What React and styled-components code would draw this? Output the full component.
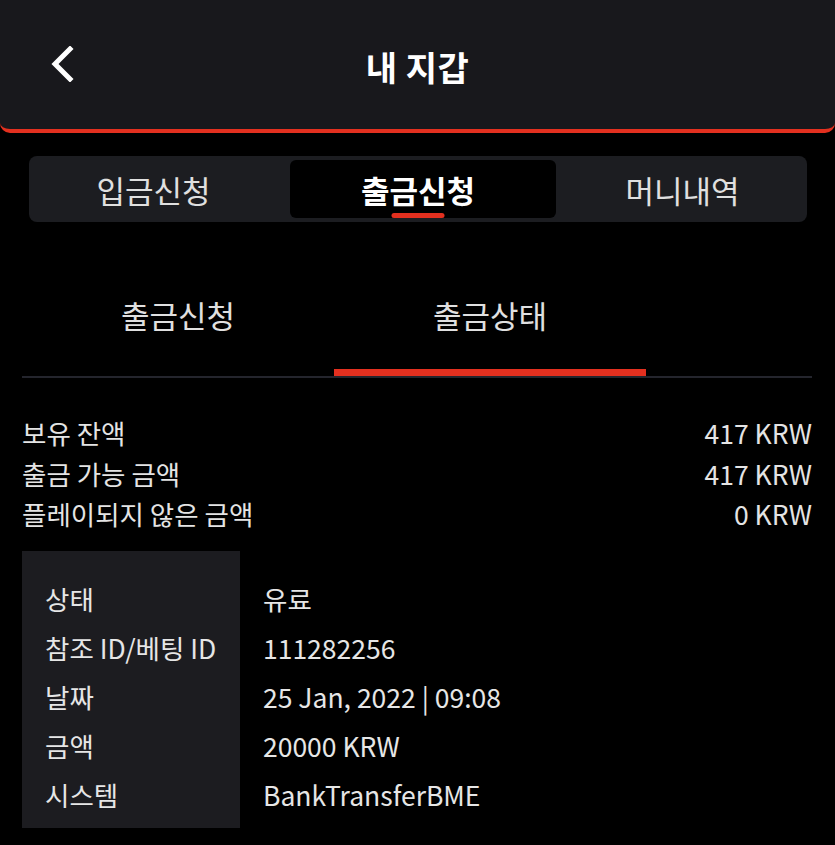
import React from 'react';
import styled, { createGlobalStyle } from 'styled-components';

const GlobalStyle = createGlobalStyle`
  html, body {
    margin: 0;
    padding: 0;
    background: #000;
  }
  body {
    font-family: 'Noto Sans CJK KR', 'Noto Sans', sans-serif;
    color: #e6e6e6;
  }
`;

const Page = styled.div`
  width: 835px;
  min-height: 845px;
  background: #000;
`;

const Header = styled.header`
  height: 129px;
  background: #18181c;
  border-bottom: 4px solid #e3301f;
  border-radius: 0 0 10px 10px;
  display: flex;
  align-items: center;
  justify-content: center;
  position: relative;
`;

const BackButton = styled.button`
  position: absolute;
  left: 44px;
  top: 44px;
  width: 36px;
  height: 40px;
  padding: 0;
  border: 0;
  background: none;
  display: flex;
  align-items: center;
  justify-content: center;
`;

const Title = styled.h1`
  margin: 4px 0 0;
  font-size: 34px;
  font-weight: 700;
  color: #fff;
  letter-spacing: 0.5px;
`;

const Pill = styled.div`
  margin: 23px 28px 0 29px;
  height: 66px;
  box-sizing: border-box;
  padding: 4px;
  background: #1c1d21;
  border-radius: 8px;
  display: grid;
  grid-template-columns: 257px 266px 1fr;
`;

const PillTab = styled.div`
  position: relative;
  display: flex;
  align-items: center;
  justify-content: center;
  border-radius: 6px;
  font-size: 31px;
  font-weight: ${(p) => (p.active ? 700 : 400)};
  color: ${(p) => (p.active ? '#fff' : '#e0e0e0')};
  background: ${(p) => (p.active ? '#000' : 'transparent')};
  padding-right: ${(p) => (p.active ? '10px' : '0')};
  &:first-child {
    padding-right: 16px;
  }
  &:last-child {
    padding-left: 6px;
  }
  &::after {
    content: '';
    display: ${(p) => (p.active ? 'block' : 'none')};
    position: absolute;
    left: calc(50% - 5px);
    bottom: 0;
    transform: translateX(-50%);
    width: 53px;
    height: 5px;
    border-radius: 3px;
    background: #e3301f;
  }
`;

const SubTabs = styled.div`
  margin: 60px 23px 0 22px;
  display: flex;
  border-bottom: 2px solid #24252d;
`;

const SubTab = styled.div`
  width: 312px;
  height: 94px;
  box-sizing: border-box;
  padding-top: 13px;
  text-align: center;
  font-size: 31px;
  line-height: 40px;
  color: #e0e0e0;
  border-bottom: 7px solid ${(p) => (p.active ? '#e3301f' : 'transparent')};
`;

const Balances = styled.div`
  margin: 35px 23px 0 22px;
`;

const BalanceRow = styled.div`
  display: flex;
  justify-content: space-between;
  font-size: 26.5px;
  line-height: 40.5px;
  color: #e4e4e4;
`;

const Detail = styled.div`
  margin: 16px 0 0 22px;
  display: flex;
`;

const Column = styled.div`
  box-sizing: border-box;
  width: ${(p) => (p.label ? '218px' : 'auto')};
  padding: 23px 0 9px 23px;
  background: ${(p) => (p.label ? '#1c1c20' : 'transparent')};
`;

const Cell = styled.div`
  height: 49px;
  font-size: 26.5px;
  line-height: 49px;
  color: #e6e6e6;
  white-space: nowrap;
`;

const rows = [
  ['상태', '유료'],
  ['참조 ID/베팅 ID', '111282256'],
  ['날짜', '25 Jan, 2022 | 09:08'],
  ['금액', '20000 KRW'],
  ['시스템', 'BankTransferBME'],
];

const balances = [
  ['보유 잔액', '417 KRW'],
  ['출금 가능 금액', '417 KRW'],
  ['플레이되지 않은 금액', '0 KRW'],
];

export default function App() {
  return (
    <Page>
      <GlobalStyle />
      <Header>
        <BackButton aria-label="back">
          <svg width="26" height="36" viewBox="0 0 26 36">
            <path d="M21 3 L6 18 L21 33" fill="none" stroke="#fff" strokeWidth="5" strokeLinecap="square" strokeLinejoin="miter" />
          </svg>
        </BackButton>
        <Title>내 지갑</Title>
      </Header>

      <Pill>
        <PillTab>입금신청</PillTab>
        <PillTab active>출금신청</PillTab>
        <PillTab>머니내역</PillTab>
      </Pill>

      <SubTabs>
        <SubTab>출금신청</SubTab>
        <SubTab active>출금상태</SubTab>
      </SubTabs>

      <Balances>
        {balances.map(([k, v]) => (
          <BalanceRow key={k}>
            <span>{k}</span>
            <span>{v}</span>
          </BalanceRow>
        ))}
      </Balances>

      <Detail>
        <Column label>
          {rows.map(([k]) => (
            <Cell key={k}>{k}</Cell>
          ))}
        </Column>
        <Column>
          {rows.map(([k, v]) => (
            <Cell key={k}>{v}</Cell>
          ))}
        </Column>
      </Detail>
    </Page>
  );
}
